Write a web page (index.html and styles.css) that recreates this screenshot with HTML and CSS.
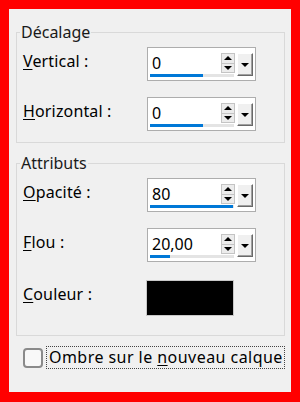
FILE: index.html
```html
<!DOCTYPE html>
<html lang="fr">

<head>
    <meta charset="UTF-8">
    <title>Ombre portée</title>
    <link rel="stylesheet" href="styles.css">
</head>

<body>
    <div class="dialog">
        <fieldset class="group">
            <legend>Décalage</legend>
            <div class="row">
                <div class="label"><u>V</u>ertical :</div>
                <div class="spin">
                    <div class="field">
                        <div class="value">0</div>
                        <div class="track"><div class="fill" style="width: 53px"></div></div>
                    </div>
                    <div class="arrows">
                        <div class="arrow up"></div>
                        <div class="arrow down"></div>
                    </div>
                    <div class="drop"></div>
                </div>
            </div>
            <div class="row">
                <div class="label"><u>H</u>orizontal :</div>
                <div class="spin">
                    <div class="field">
                        <div class="value">0</div>
                        <div class="track"><div class="fill" style="width: 53px"></div></div>
                    </div>
                    <div class="arrows">
                        <div class="arrow up"></div>
                        <div class="arrow down"></div>
                    </div>
                    <div class="drop"></div>
                </div>
            </div>
        </fieldset>

        <fieldset class="group group-attr">
            <legend>Attributs</legend>
            <div class="row">
                <div class="label"><u>O</u>pacité :</div>
                <div class="spin">
                    <div class="field">
                        <div class="value">80</div>
                        <div class="track"><div class="fill" style="width: 83px"></div></div>
                    </div>
                    <div class="arrows">
                        <div class="arrow up"></div>
                        <div class="arrow down"></div>
                    </div>
                    <div class="drop"></div>
                </div>
            </div>
            <div class="row">
                <div class="label"><u>F</u>lou :</div>
                <div class="spin">
                    <div class="field">
                        <div class="value">20,00</div>
                        <div class="track"><div class="fill" style="width: 20px"></div></div>
                    </div>
                    <div class="arrows">
                        <div class="arrow up"></div>
                        <div class="arrow down"></div>
                    </div>
                    <div class="drop"></div>
                </div>
            </div>
            <div class="row row-color">
                <div class="label"><u>C</u>ouleur :</div>
                <div class="swatch"></div>
            </div>
        </fieldset>

        <div class="check">
            <div class="box"></div>
            <div class="check-label">Ombre sur le <u>n</u>ouveau calque</div>
        </div>
    </div>
</body>

</html>
```

FILE: styles.css
```css
body {
    margin: 0;
    background-color: #ff0000;
    font-family: "Noto Sans", sans-serif;
    font-size: 16px;
    color: #000;
}

.dialog {
    margin: 9px;
    width: 282px;
    height: 383px;
    box-sizing: border-box;
    background-color: #f0f0f0;
    padding: 13px 6px 0 7px;
}

.group {
    margin: 0;
    min-width: 0;
    border: 1px solid #d9d9d9;
    padding: 5px 6px 11px 6px;
}

.group legend {
    padding: 0 1px;
    margin-left: -3px;
    line-height: 20px;
    color: #1a1a1a;
}

.group-attr {
    margin-top: 10px;
    padding-bottom: 19px;
}

.row {
    display: flex;
    height: 34px;
}

.row + .row {
    margin-top: 16px;
}

.row-color {
    height: 36px;
}

.row + .row-color {
    margin-top: 18px;
}

.label {
    width: 124px;
    flex-shrink: 0;
    line-height: 20px;
    margin-top: 4px;
    letter-spacing: 0.15px;
}

u {
    text-decoration-thickness: 1px;
    text-underline-offset: 2px;
}

/* spin box */
.spin {
    display: flex;
    align-items: flex-start;
    width: 109px;
    height: 34px;
    box-sizing: border-box;
    border: 1px solid #adadad;
    background-color: #fff;
    padding: 4px 0 0 2px;
}

.field {
    width: 71px;
    flex-shrink: 0;
}

.value {
    line-height: 22px;
    padding-left: 2px;
}

.track {
    width: 84px;
    height: 3px;
    background-color: #e4e4e4;
}

.fill {
    height: 3px;
    background-color: #0078d7;
}

.arrows {
    width: 14px;
    height: 20px;
    margin-top: 1px;
    display: flex;
    flex-direction: column;
}

.arrow {
    flex: 1;
    box-sizing: border-box;
    border: 1px solid #c4c4c4;
    background-color: #ececec;
    display: flex;
    align-items: center;
    justify-content: center;
}

.arrow + .arrow {
    border-top: none;
}

.arrow::after {
    content: "";
    border-left: 4px solid transparent;
    border-right: 4px solid transparent;
}

.up::after {
    border-bottom: 4px solid #000;
}

.down::after {
    border-top: 4px solid #000;
}

.drop {
    width: 16px;
    height: 23px;
    margin: 1px 0 0 2px;
    box-sizing: border-box;
    background-color: #f0f0f0;
    border-top: 1px solid #fff;
    border-left: 1px solid #fff;
    border-right: 1px solid #696969;
    border-bottom: 1px solid #696969;
    box-shadow: inset -1px -1px 0 #a0a0a0;
    display: flex;
    align-items: center;
    justify-content: center;
}

.drop::after {
    content: "";
    border-left: 4px solid transparent;
    border-right: 4px solid transparent;
    border-top: 4px solid #000;
}

.swatch {
    width: 88px;
    height: 36px;
    margin-left: -1px;
    box-sizing: border-box;
    border: 1px solid #c8c8c8;
    background-color: #000;
}

/* checkbox */
.check {
    display: flex;
    align-items: center;
    margin-top: 10px;
    padding-left: 7px;
}

.box {
    width: 20px;
    height: 20px;
    box-sizing: border-box;
    border: 2px solid #8a8a8a;
    border-radius: 4px;
    background-color: #f8f8f8;
    margin-right: 3px;
}

.check-label {
    border: 1px dotted #444;
    padding: 0 1px 0 2px;
    line-height: 21px;
    letter-spacing: 0.45px;
    white-space: nowrap;
}
```
